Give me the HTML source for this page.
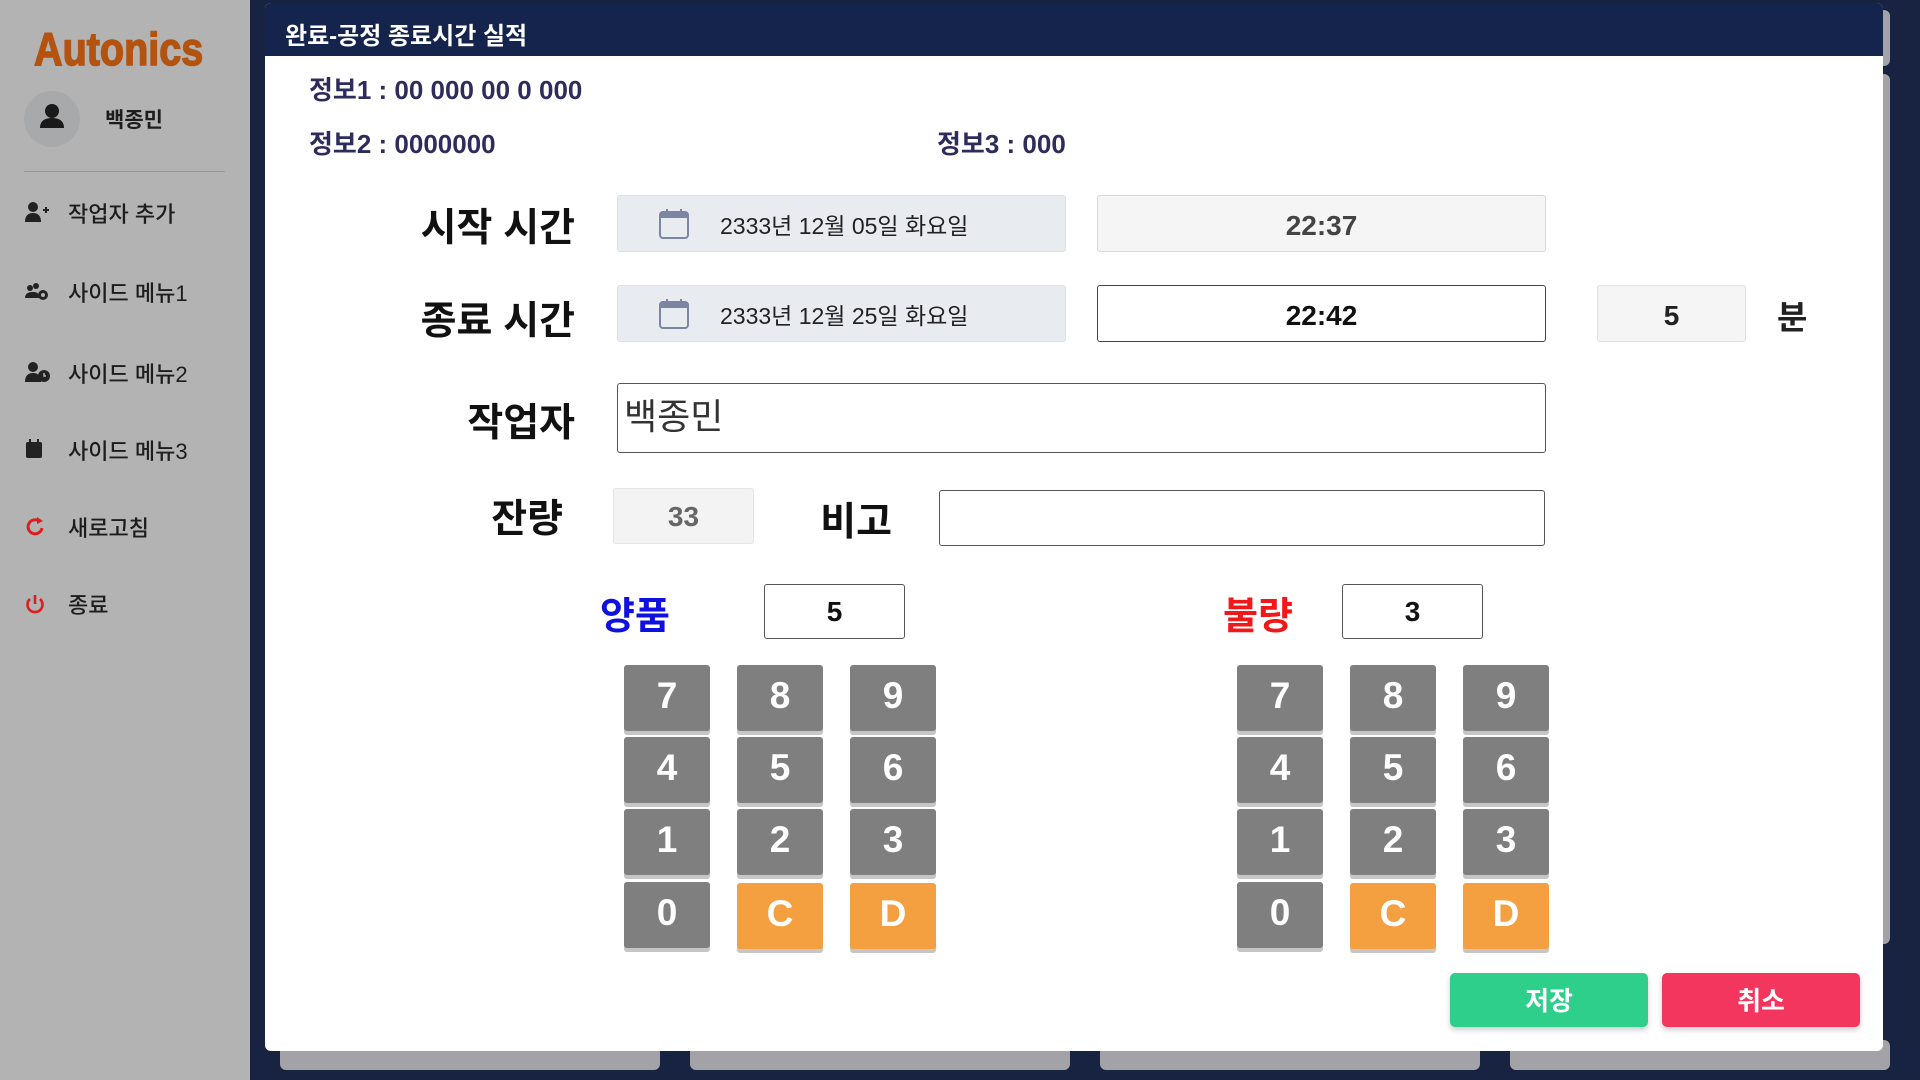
<!DOCTYPE html>
<html><head><meta charset="utf-8"><style>
*{margin:0;padding:0;box-sizing:border-box}
body{width:1920px;height:1080px;overflow:hidden;background:#172340;font-family:"Liberation Sans","Noto Sans CJK KR",sans-serif;position:relative}
.abs{position:absolute}
#side{left:0;top:0;width:250px;height:1080px;background:#b3b3b3}
.logo{left:34px;top:22px;font-size:46px;font-weight:bold;color:#b4530f;letter-spacing:0px;transform:scaleX(0.86);transform-origin:left;-webkit-text-stroke:1.5px #b4530f}
.av{left:24px;top:91px;width:56px;height:56px;border-radius:50%;background:#a7a9aa}
.menu{left:68px;font-size:22px;color:#1d1d1d;font-weight:500}
.mi{left:24px;width:26px;height:22px}
.card{background:#a3a3a7;border-radius:6px}
#modal{left:265px;top:3px;width:1618px;height:1048px;background:#fff;border-radius:6px;overflow:hidden}
.hdr{left:0;top:0;width:100%;height:53px;background:#14244c}
.t{font-weight:bold}
.info{font-size:26px;color:#2e2c5c;font-weight:bold}
.lbl{font-size:39px;font-weight:bold;color:#111;text-align:right}
.box{border-radius:3px}
.key{width:86px;height:66px;background:#7f7f7f;color:#fff;font-size:37px;font-weight:bold;text-align:center;line-height:62px;border-radius:3px;box-shadow:0 4px 0 #c6c6c6}
.key.o{background:#f4a041}
.btn{height:54px;width:198px;border-radius:5px;color:#fff;font-size:26px;font-weight:bold;text-align:center;line-height:56px;box-shadow:0 3px 6px rgba(0,0,0,.2)}
</style></head><body>
<div class="abs card" style="left:280px;top:1040px;width:380px;height:30px"></div>
<div class="abs card" style="left:690px;top:1040px;width:380px;height:30px"></div>
<div class="abs card" style="left:1100px;top:1040px;width:380px;height:30px"></div>
<div class="abs card" style="left:1510px;top:1040px;width:380px;height:30px"></div>
<div class="abs card" style="left:1860px;top:74px;width:30px;height:870px"></div>
<div class="abs card" style="left:1860px;top:10px;width:30px;height:56px"></div>
<div id="side" class="abs">
<div class="abs logo">Autonics</div>
<div class="abs av"><svg width="56" height="56" viewBox="0 0 56 56"><circle cx="28" cy="20" r="7" fill="#1a1a1a"/><path d="M16 37c0-8 6-10 12-10s12 2 12 10z" fill="#1a1a1a"/></svg></div>
<div class="abs" style="left:105px;top:104px;font-size:21px;font-weight:bold;color:#1d1d1d">백종민</div>
<div class="abs" style="left:24px;top:171px;width:201px;height:1px;background:#999"></div>
<svg class="abs mi" style="top:201px" viewBox="0 0 26 22"><circle cx="9" cy="6" r="5" fill="#222"/><path d="M1 21c0-7 4-9 8-9s8 2 8 9z" fill="#222"/><path d="M19 9h6M22 6v6" stroke="#222" stroke-width="2"/></svg>
<div class="abs menu" style="top:197px">작업자 추가</div>
<svg class="abs mi" style="top:281px" viewBox="0 0 26 22"><circle cx="6" cy="7" r="3" fill="#222"/><circle cx="12" cy="5" r="3" fill="#222"/><path d="M1 17c0-5 4-6 8-6s6 1 6 6z" fill="#222"/><circle cx="19" cy="14" r="5" fill="#222"/><circle cx="19" cy="14" r="2" fill="#b3b3b3"/></svg>
<div class="abs menu" style="top:276px">사이드 메뉴1</div>
<svg class="abs mi" style="top:361px" viewBox="0 0 26 22"><circle cx="9" cy="6" r="5" fill="#222"/><path d="M1 21c0-7 4-9 8-9s8 2 8 9z" fill="#222"/><circle cx="20" cy="15" r="6" fill="#222"/><path d="M20 12v3h2" stroke="#b3b3b3" stroke-width="1.5" fill="none"/></svg>
<div class="abs menu" style="top:357px">사이드 메뉴2</div>
<svg class="abs mi" style="top:438px" viewBox="0 0 26 22"><rect x="2" y="4" width="16" height="16" rx="2" fill="#222"/><rect x="5" y="1" width="2" height="5" fill="#222"/><rect x="13" y="1" width="2" height="5" fill="#222"/></svg>
<div class="abs menu" style="top:434px">사이드 메뉴3</div>
<svg class="abs mi" style="top:516px" viewBox="0 0 26 22"><path d="M15 5a7 7 0 1 0 3 7" stroke="#d9201f" stroke-width="3" fill="none"/><path d="M13 1l6 4-6 3z" fill="#d9201f"/></svg>
<div class="abs menu" style="top:511px">새로고침</div>
<svg class="abs mi" style="top:593px" viewBox="0 0 26 22"><path d="M6 6a7.5 7.5 0 1 0 10 0" stroke="#d9201f" stroke-width="2.6" fill="none"/><path d="M11 2v9" stroke="#d9201f" stroke-width="2.6"/></svg>
<div class="abs menu" style="top:588px">종료</div>
</div>
<div id="modal" class="abs">
<div class="abs hdr"></div>
<div class="abs t" style="left:20px;top:13px;font-size:24px;color:#fff">완료-공정 종료시간 실적</div>
<div class="abs info" style="left:44px;top:67px">정보1 : 00 000 00 0 000</div>
<div class="abs info" style="left:44px;top:121px">정보2 : 0000000</div>
<div class="abs info" style="left:672px;top:121px">정보3 : 000</div>
<div class="abs lbl" style="left:60px;width:250px;top:194px">시작 시간</div>
<div class="abs lbl" style="left:60px;width:250px;top:287px">종료 시간</div>
<div class="abs box" style="left:352px;top:192px;width:449px;height:57px;background:#e8ebef;border:1px solid #dde0e4"></div>
<div class="abs box" style="left:352px;top:282px;width:449px;height:57px;background:#e8ebef;border:1px solid #dde0e4"></div>
<svg class="abs" style="left:393px;top:205px" width="32" height="32" viewBox="0 0 32 32"><rect x="2" y="4" width="28" height="26" rx="3" fill="none" stroke="#7c86a3" stroke-width="2"/><rect x="2" y="4" width="28" height="6" fill="#7c86a3"/><rect x="8" y="1" width="2" height="5" fill="#7c86a3"/><rect x="22" y="1" width="2" height="5" fill="#7c86a3"/></svg>
<svg class="abs" style="left:393px;top:295px" width="32" height="32" viewBox="0 0 32 32"><rect x="2" y="4" width="28" height="26" rx="3" fill="none" stroke="#7c86a3" stroke-width="2"/><rect x="2" y="4" width="28" height="6" fill="#7c86a3"/><rect x="8" y="1" width="2" height="5" fill="#7c86a3"/><rect x="22" y="1" width="2" height="5" fill="#7c86a3"/></svg>
<div class="abs" style="left:455px;top:204px;font-size:23px;color:#222">2333년 12월 05일 화요일</div>
<div class="abs" style="left:455px;top:294px;font-size:23px;color:#222">2333년 12월 25일 화요일</div>
<div class="abs box t" style="left:832px;top:192px;width:449px;height:57px;background:#f5f5f5;border:1px solid #d8d8d8;text-align:center;line-height:60px;font-size:28px;color:#444">22:37</div>
<div class="abs box t" style="left:832px;top:282px;width:449px;height:57px;background:#fff;border:1px solid #444;text-align:center;line-height:60px;font-size:28px;color:#111">22:42</div>
<div class="abs box t" style="left:1332px;top:282px;width:149px;height:57px;background:#f5f5f5;border:1px solid #e0e0e0;text-align:center;line-height:60px;font-size:28px;color:#222">5</div>
<div class="abs t" style="left:1512px;top:288px;font-size:33px;color:#222">분</div>
<div class="abs lbl" style="left:60px;width:250px;top:389px">작업자</div>
<div class="abs box" style="left:352px;top:380px;width:929px;height:70px;border:1px solid #555;font-size:36px;line-height:66px;padding-left:6px;color:#333">백종민</div>
<div class="abs lbl" style="left:200px;width:98px;top:485px">잔량</div>
<div class="abs box" style="left:348px;top:485px;width:141px;height:56px;background:#f3f3f3;border:1px solid #e4e4e4;text-align:center;line-height:56px;font-size:28px;font-weight:bold;color:#666">33</div>
<div class="abs lbl" style="left:545px;width:82px;top:488px">비고</div>
<div class="abs box" style="left:674px;top:487px;width:606px;height:56px;border:1px solid #555"></div>
<div class="abs t" style="left:335px;top:582px;font-size:38px;color:#1010e0">양품</div>
<div class="abs box t" style="left:499px;top:581px;width:141px;height:55px;border:1px solid #555;text-align:center;line-height:53px;font-size:28px;color:#111">5</div>
<div class="abs t" style="left:958px;top:582px;font-size:38px;color:#f01818">불량</div>
<div class="abs box t" style="left:1077px;top:581px;width:141px;height:55px;border:1px solid #555;text-align:center;line-height:53px;font-size:28px;color:#111">3</div>
<div class="abs key" style="left:359px;top:662px">7</div><div class="abs key" style="left:472px;top:662px">8</div><div class="abs key" style="left:585px;top:662px">9</div>
<div class="abs key" style="left:359px;top:734px">4</div><div class="abs key" style="left:472px;top:734px">5</div><div class="abs key" style="left:585px;top:734px">6</div>
<div class="abs key" style="left:359px;top:806px">1</div><div class="abs key" style="left:472px;top:806px">2</div><div class="abs key" style="left:585px;top:806px">3</div>
<div class="abs key" style="left:359px;top:879px">0</div><div class="abs key o" style="left:472px;top:880px">C</div><div class="abs key o" style="left:585px;top:880px">D</div>
<div class="abs key" style="left:972px;top:662px">7</div><div class="abs key" style="left:1085px;top:662px">8</div><div class="abs key" style="left:1198px;top:662px">9</div>
<div class="abs key" style="left:972px;top:734px">4</div><div class="abs key" style="left:1085px;top:734px">5</div><div class="abs key" style="left:1198px;top:734px">6</div>
<div class="abs key" style="left:972px;top:806px">1</div><div class="abs key" style="left:1085px;top:806px">2</div><div class="abs key" style="left:1198px;top:806px">3</div>
<div class="abs key" style="left:972px;top:879px">0</div><div class="abs key o" style="left:1085px;top:880px">C</div><div class="abs key o" style="left:1198px;top:880px">D</div>
<div class="abs btn" style="left:1185px;top:970px;background:#2ecf8b">저장</div>
<div class="abs btn" style="left:1397px;top:970px;background:#f3365d">취소</div>
</div>
</body></html>
